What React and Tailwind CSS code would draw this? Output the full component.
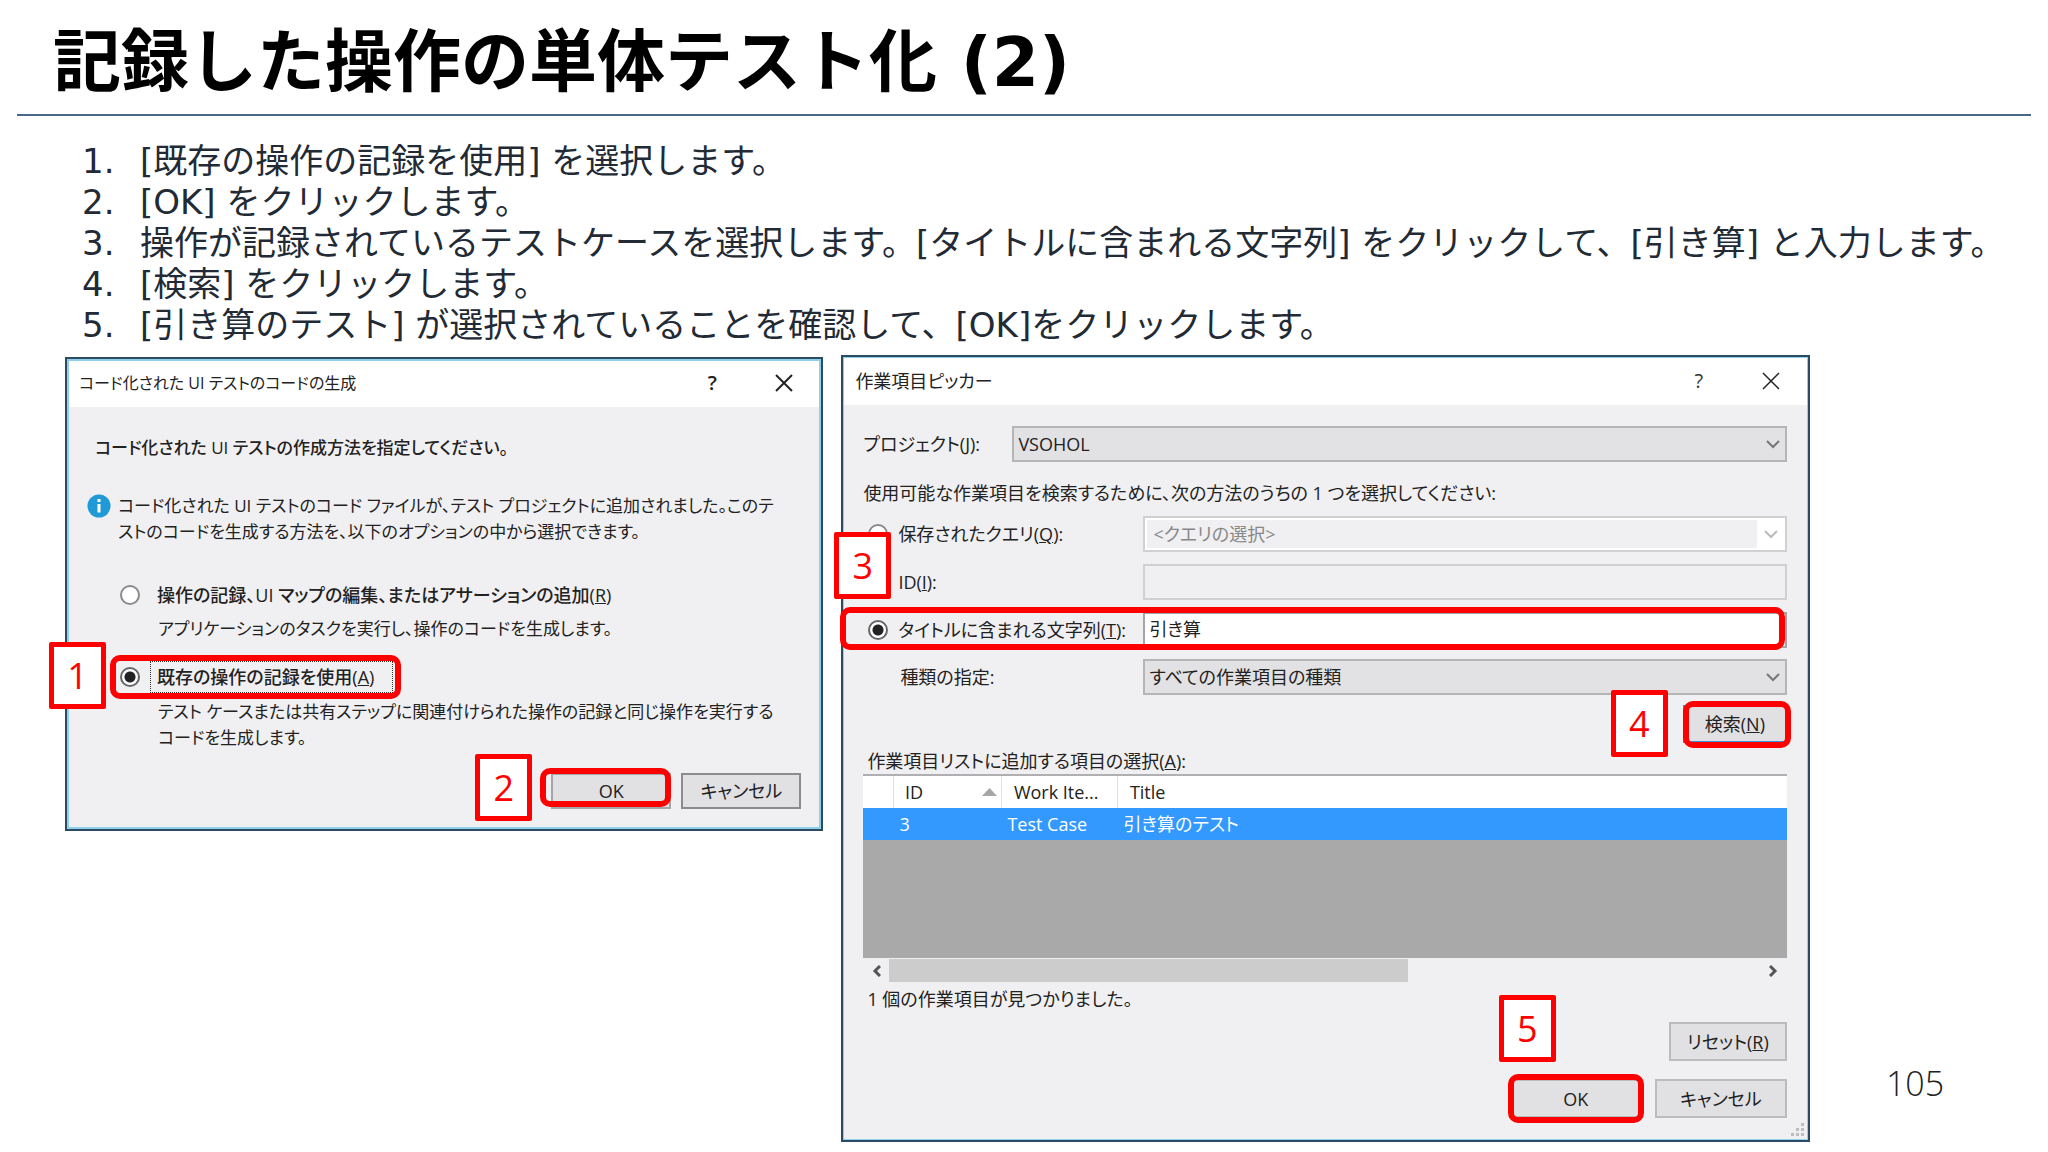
import React from "react";

const steps = [
  "[既存の操作の記録を使用] を選択します。",
  "[OK] をクリックします。",
  "操作が記録されているテストケースを選択します。[タイトルに含まれる文字列] をクリックして、[引き算] と入力します。",
  "[検索] をクリックします。",
  "[引き算のテスト] が選択されていることを確認して、[OK]をクリックします。",
];

function Badge({ children, className }) {
  return (
    <span
      className={`absolute z-20 flex h-[67px] w-[57px] items-center justify-center rounded-xs border-5 border-[#ff0000] bg-white text-4xl font-normal text-[#ff0000] ${className}`}
    >
      {children}
    </span>
  );
}

function Ring({ className }) {
  return (
    <span
      aria-hidden="true"
      className={`pointer-events-none absolute z-10 rounded-[10px] border-6 border-[#ff0000] ${className}`}
    />
  );
}

function Radio(props) {
  return (
    <input
      type="radio"
      className="size-5 shrink-0 appearance-none rounded-full border-2 border-[#8a8a8a] bg-white checked:border-[#666] checked:bg-[radial-gradient(circle,#222_0_5px,#fff_6px)]"
      {...props}
    />
  );
}

function TitleBar({ title, bold }) {
  return (
    <header className="flex h-12 items-center bg-white pr-[25px] pl-3">
      <h2 className={bold ? "flex-1 text-base text-[#222]" : "flex-1 text-lg text-[#222]"}>{title}</h2>
      <button
        type="button"
        aria-label="ヘルプ"
        className={bold ? "w-6 text-xl font-semibold text-[#222]" : "w-6 text-xl text-[#333]"}
      >
        ?
      </button>
      <button type="button" aria-label="閉じる" className="ml-12 flex w-6 justify-center">
        <svg width="18" height="18" viewBox="0 0 18 18" fill="none" stroke="#222" strokeWidth={bold ? 2 : 1.5}>
          <path d="M1 1 17 17M17 1 1 17" />
        </svg>
      </button>
    </header>
  );
}

function Button({ children, className }) {
  return (
    <button type="button" className={`border-2 bg-[#e1e0e2] text-lg text-[#222] ${className}`}>
      {children}
    </button>
  );
}

function Select({ id, label, value, disabled }) {
  return (
    <div className="relative min-w-0 flex-1">
      <select
        id={id}
        aria-label={label}
        disabled={disabled}
        className={
          disabled
            ? "block h-9 w-full appearance-none border-2 border-[#d0cfd1] bg-[#f0eff1] px-2 text-lg text-[#888] opacity-100 outline-2 -outline-offset-4 outline-white"
            : "block h-9 w-full appearance-none border-2 border-[#b5b4b6] bg-[#e2e1e3] px-1 text-lg text-[#222]"
        }
      >
        <option>{value}</option>
      </select>
      <span
        className={
          disabled
            ? "pointer-events-none absolute inset-y-[2px] right-[2px] flex w-7 items-center justify-center bg-white text-[#bbb]"
            : "pointer-events-none absolute inset-y-[2px] right-[2px] flex w-6 items-center justify-center text-[#777]"
        }
      >
        <svg width="14" height="9" viewBox="0 0 14 9" fill="none" stroke="currentColor" strokeWidth="2">
          <path d="M1 1 7 7 13 1" />
        </svg>
      </span>
    </div>
  );
}

function GenerateDialog() {
  return (
    <section className="mt-[2px] self-start border-2 border-[#2c4a60] bg-[#f0eff1] pb-5 text-[#222] outline-2 -outline-offset-4 outline-[#8fd0ee]">
      <TitleBar title="コード化された UI テストのコードの生成" bold />
      <p className="mt-7 ml-7 text-[17px] leading-[26px] font-medium">
        コード化された UI テストの作成方法を指定してください。
      </p>
      <div className="mt-8 ml-5 flex gap-[7px]">
        <svg className="mt-px shrink-0" width="24" height="24" viewBox="0 0 24 24">
          <circle cx="12" cy="12" r="11.5" fill="#1f9ad6" />
          <path d="M12 10v8.500M12 5v3" stroke="#fff" strokeWidth="3" />
        </svg>
        <p className="text-[17px] leading-[26px] whitespace-nowrap">
          コード化された UI テストのコード ファイルが、テスト プロジェクトに追加されました。このテ
          <br />
          ストのコードを生成する方法を、以下のオプションの中から選択できます。
        </p>
      </div>

      <div className="mt-[37px] ml-[53px]">
        <div className="flex items-center gap-[17px]">
          <Radio id="gen-record" name="generate" />
          <label htmlFor="gen-record" className="text-lg leading-[26px] font-medium">
            操作の記録、UI マップの編集、またはアサーションの追加(<u>R</u>)
          </label>
        </div>
        <p className="mt-2 ml-[38px] text-[17px] leading-[26px]">
          アプリケーションのタスクを実行し、操作のコードを生成します。
        </p>
        <div className="relative mt-[19px] flex w-[273px] items-center gap-[10px]">
          <Radio id="gen-existing" name="generate" defaultChecked />
          <label
            htmlFor="gen-existing"
            className="flex-1 border border-dotted border-[#333] pl-[6px] text-lg leading-[30px] font-medium whitespace-nowrap"
          >
            既存の操作の記録を使用(<u>A</u>)
          </label>
          <Ring className="-inset-y-[6px] -right-[8px] -left-[10px]" />
          <Badge className="-top-[19px] -left-[71px]">1</Badge>
        </div>
        <p className="mt-[6px] ml-[38px] text-[17px] leading-[26px] whitespace-nowrap">
          テスト ケースまたは共有ステップに関連付けられた操作の記録と同じ操作を実行する
          <br />
          コードを生成します。
        </p>
      </div>

      <div className="mt-[22px] mr-5 flex justify-end gap-[10px]">
        <div className="relative">
          <Button className="h-9 w-[120px] border-[#a5a4a6]">OK</Button>
          <Ring className="-top-[5px] right-0 bottom-[2px] -left-[11px]" />
          <Badge className="-top-[19px] -left-[76px]">2</Badge>
        </div>
        <Button className="h-9 w-[120px] border-[#8c8b8d]">キャンセル</Button>
      </div>
    </section>
  );
}

function ResultsTable() {
  return (
    <div className="h-[184px] border-t-2 border-[#b0afb1] bg-[#a9a9aa]">
      <table aria-labelledby="list-label" className="w-full table-fixed text-left text-lg">
        <colgroup>
          <col className="w-[30px]" />
          <col className="w-[108px]" />
          <col className="w-[116px]" />
          <col />
        </colgroup>
        <thead>
          <tr className="h-8 bg-white text-[#222]">
            <th className="border-r border-[#e0e0e0]" />
            <th className="border-r border-[#e0e0e0] pr-1 pl-[11px] font-normal">
              <span className="flex items-center justify-between">
                ID
                <svg width="15" height="8" viewBox="0 0 15 8" fill="#a6a6a6">
                  <path d="M0 8 7.500 0 15 8z" />
                </svg>
              </span>
            </th>
            <th className="border-r border-[#e0e0e0] pl-3 font-normal">Work Ite...</th>
            <th className="pl-3 font-normal">Title</th>
          </tr>
        </thead>
        <tbody>
          <tr className="h-8 bg-[#3399ff] text-white">
            <td />
            <td className="pl-[6px]">3</td>
            <td className="pl-[6px]">Test Case</td>
            <td className="pl-[6px]">引き算のテスト</td>
          </tr>
        </tbody>
      </table>
    </div>
  );
}

function PickerDialog() {
  return (
    <section className="relative border-2 border-[#2c4a60] bg-[#f0eff1] pb-[22px] text-[#222] outline-1 -outline-offset-3 outline-[#8fd0ee]">
      <TitleBar title="作業項目ピッカー" />
      <div className="mr-[21px] ml-5">
        <div className="flex items-center pt-[21px]">
          <label htmlFor="project" className="w-[149px] text-lg">
            プロジェクト(<u>J</u>):
          </label>
          <Select id="project" value="VSOHOL" />
        </div>
        <p className="mt-[18px] text-lg leading-[26px]">
          使用可能な作業項目を検索するために、次の方法のうちの 1 つを選択してください:
        </p>

        <div className="mt-[10px] flex items-center">
          <div className="flex w-[280px] items-center gap-[10px] pl-[5px]">
            <Radio id="by-query" name="picker" />
            <label htmlFor="by-query" className="text-lg">
              保存されたクエリ(<u>Q</u>):
            </label>
          </div>
          <Select id="query" label="クエリの選択" value="<クエリの選択>" disabled />
        </div>
        <div className="relative mt-3 flex items-center">
          <div className="flex w-[280px] items-center gap-[10px] pl-[5px]">
            <Radio id="by-id" name="picker" />
            <label htmlFor="by-id" className="text-lg">
              ID(<u>I</u>):
            </label>
          </div>
          <input
            type="text"
            disabled
            aria-label="ID"
            className="h-9 min-w-0 flex-1 border-2 border-[#d0cfd1] bg-[#f0eff1] px-1"
          />
          <Badge className="-top-8 -left-[29px]">3</Badge>
        </div>
        <div className="relative mt-3 flex items-center">
          <div className="flex w-[280px] items-center gap-[10px] pl-[5px]">
            <Radio id="by-title" name="picker" defaultChecked />
            <label htmlFor="by-title" className="text-lg whitespace-nowrap">
              タイトルに含まれる文字列(<u>T</u>):
            </label>
          </div>
          <input
            type="text"
            aria-label="タイトルに含まれる文字列"
            defaultValue="引き算"
            className="h-9 min-w-0 flex-1 border-2 border-[#a5a4a6] bg-white px-1 pb-1 text-lg"
          />
          <Ring className="-top-[5px] right-[2px] -bottom-[2px] -left-[23px]" />
        </div>
        <div className="mt-[11px] flex items-center">
          <label htmlFor="kind" className="w-[280px] pl-[37px] text-lg">
            種類の指定:
          </label>
          <Select id="kind" value="すべての作業項目の種類" />
        </div>

        <div className="mt-[10px] flex justify-end">
          <div className="relative">
            <Button className="h-[38px] w-[104px] border-[#3c8fd8]">
              検索(<u>N</u>)
            </Button>
            <Ring className="-top-1 -right-1 -bottom-[5px] left-0" />
            <Badge className="-top-[15px] -left-[72px]">4</Badge>
          </div>
        </div>

        <p id="list-label" className="mt-[5px] ml-1 text-lg leading-[26px]">
          作業項目リストに追加する項目の選択(<u>A</u>):
        </p>
        <ResultsTable />

        <div className="mt-px flex h-[23px] items-center text-[#555]">
          <button type="button" aria-label="左へスクロール" className="flex w-[26px] justify-center">
            <svg width="9" height="12" viewBox="0 0 9 12" fill="none" stroke="currentColor" strokeWidth="3">
              <path d="M8 1 3 6l5 5" />
            </svg>
          </button>
          <div className="h-full flex-1">
            <div className="h-full w-[59.5%] bg-[#cdcccd]" />
          </div>
          <button type="button" aria-label="右へスクロール" className="flex w-[26px] justify-center">
            <svg width="9" height="12" viewBox="0 0 9 12" fill="none" stroke="currentColor" strokeWidth="3">
              <path d="M1 1l5 5-5 5" />
            </svg>
          </button>
        </div>
        <p className="mt-1 ml-1 text-lg leading-[26px]">1 個の作業項目が見つかりました。</p>

        <div className="mt-[10px] flex flex-col items-end gap-[18px]">
          <Button className="h-[39px] w-[118px] border-[#bcbbbd]">
            リセット(<u>R</u>)
          </Button>
          <div className="flex gap-3">
            <div className="relative">
              <Button className="h-[39px] w-[134px] border-[#bcbbbd]">OK</Button>
              <Ring className="-inset-y-[5px] -right-px -left-px" />
              <Badge className="-top-[84px] -left-[10px]">5</Badge>
            </div>
            <Button className="h-[39px] w-[132px] border-[#bcbbbd]">キャンセル</Button>
          </div>
        </div>
      </div>
      <svg className="absolute right-1 bottom-1" width="13" height="13" viewBox="0 0 13 13" fill="#bdbdbd">
        <path d="M10 0h3v3h-3zM5 5h3v3H5zM10 5h3v3h-3zM0 10h3v3H0zM5 10h3v3H5zM10 10h3v3h-3z" />
      </svg>
    </section>
  );
}

export default function App() {
  return (
    <main
      className="min-h-screen bg-white font-['DejaVu_Sans','Noto_Sans_CJK_JP',sans-serif]"
      lang="ja"
    >
      <h1 className="mx-[17px] border-b-2 border-[#4a6688] pt-[18px] pb-[6px] pl-9 text-[68px] leading-[90px] font-bold text-black">
        記録した操作の単体テスト化 (2)
      </h1>
      <ol className="mt-[25px] pl-[82px] text-[34px] leading-[41px] whitespace-nowrap text-[#222a35]">
        {steps.map((step, i) => (
          <li key={step} className="flex">
            <span className="w-[58px]">{i + 1}.</span>
            <span>{step}</span>
          </li>
        ))}
      </ol>
      <div className="mt-[9px] grid grid-cols-[minmax(0,758fr)_minmax(0,968fr)_minmax(0,220fr)] gap-x-[18px] pl-[65px] font-['Open_Sans','Noto_Sans_CJK_JP',sans-serif] [font-feature-settings:'palt']">
        <GenerateDialog />
        <PickerDialog />
        <footer className="self-end pb-[34px] pl-[58px] text-[34px] leading-[50px] font-light text-[#222]">105</footer>
      </div>
    </main>
  );
}
